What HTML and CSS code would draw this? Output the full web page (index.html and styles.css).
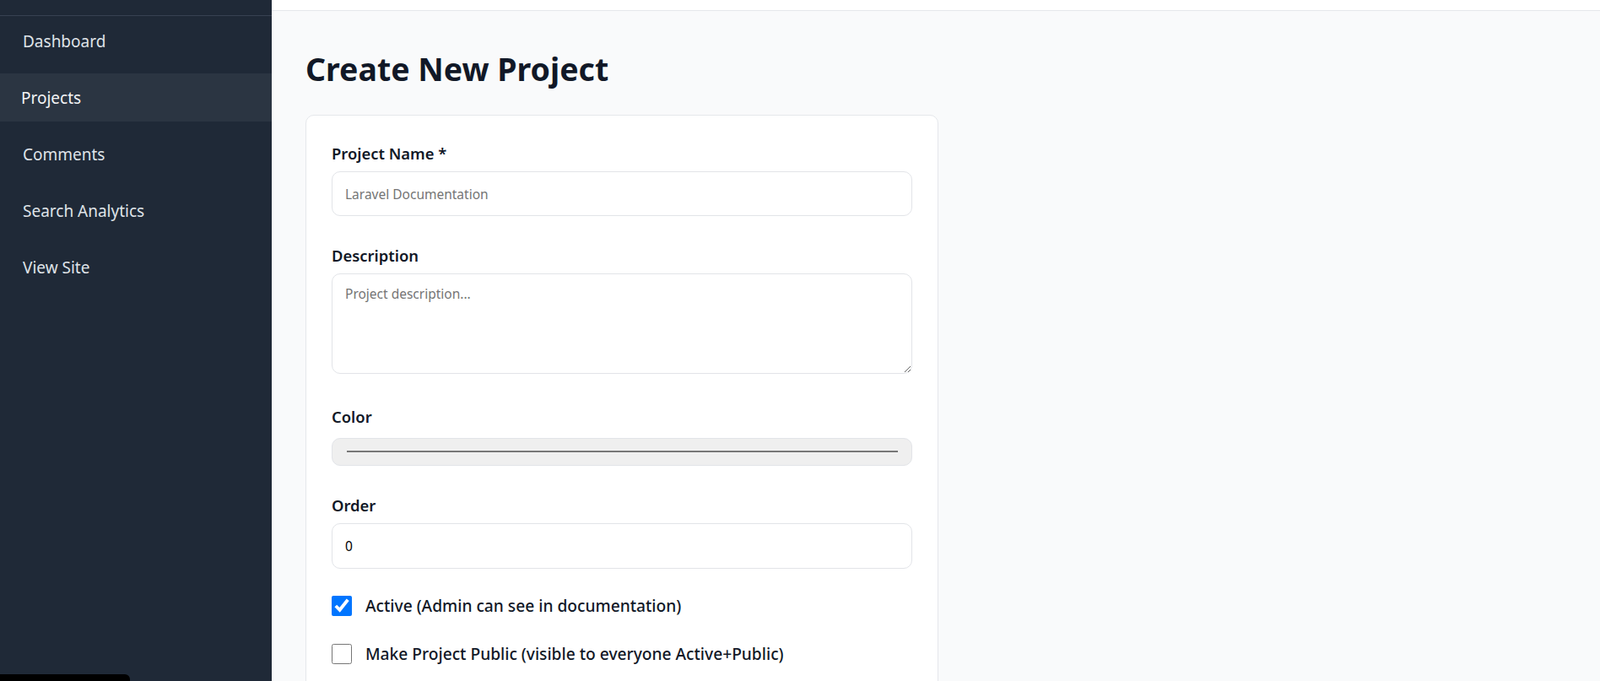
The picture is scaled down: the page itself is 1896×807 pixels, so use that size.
FILE: index.html
```html
<!DOCTYPE html>
<html lang="en">
<head>
<meta charset="utf-8">
<title>Create New Project</title>
<link rel="stylesheet" href="styles.css">
</head>
<body>
<div class="layout">
  <aside class="sidebar">
    <div class="sidebar-top"></div>
    <nav class="nav">
      <a class="nav-item" href="#">Dashboard</a>
      <a class="nav-item active" href="#">Projects</a>
      <a class="nav-item" href="#">Comments</a>
      <a class="nav-item" href="#">Search Analytics</a>
      <a class="nav-item" href="#">View Site</a>
    </nav>
  </aside>
  <main class="main">
    <div class="topbar"></div>
    <div class="content">
      <h1 class="title">Create New Project</h1>
      <form class="card">
        <div class="field">
          <label class="label" for="name">Project Name *</label>
          <input class="input" id="name" type="text" placeholder="Laravel Documentation">
        </div>
        <div class="field field-textarea">
          <label class="label" for="desc">Description</label>
          <textarea class="input textarea" id="desc" placeholder="Project description..."></textarea>
        </div>
        <div class="field">
          <label class="label label-color" for="color">Color</label>
          <input class="color" id="color" type="color" value="#000000">
        </div>
        <div class="field">
          <label class="label" for="order">Order</label>
          <input class="input input-order" id="order" type="number" value="0">
        </div>
        <div class="checks">
          <label class="check">
            <input class="checkbox" type="checkbox" checked>
            <span>Active (Admin can see in documentation)</span>
          </label>
          <label class="check">
            <input class="checkbox" type="checkbox">
            <span>Make Project Public (visible to everyone Active+Public)</span>
          </label>
        </div>
      </form>
    </div>
  </main>
</div>
<div class="debug-tab"></div>
</body>
</html>
```

FILE: styles.css
```css
* { box-sizing: border-box; }
html, body { height: 100%; }
body {
  margin: 0;
  font-family: "Noto Sans", "Open Sans", sans-serif;
  color: #111827;
  background: #f9fafb;
  overflow: hidden;
}
.layout {
  display: flex;
  min-height: 100%;
}
.sidebar {
  width: 322px;
  flex: none;
  background: #1f2937;
  min-height: 807px;
}
.sidebar-top {
  height: 19px;
  border-bottom: 1px solid #374151;
}
.nav {
  display: flex;
  flex-direction: column;
  gap: 10px;
  padding-top: 1px;
}
.nav-item {
  display: flex;
  align-items: center;
  height: 57px;
  padding-left: 27px;
  color: #dfe3e8;
  text-decoration: none;
  font-size: 19px;
}
.nav-item.active {
  background: #2b3542;
  color: #f3f4f6;
  padding-left: 25px;
}
.main {
  flex: 1;
  min-width: 0;
}
.topbar {
  height: 13px;
  background: #fff;
  border-bottom: 1px solid #e5e7eb;
}
.content {
  padding: 46px 40px 0;
}
.title {
  margin: 0 0 31px;
  font-size: 37.5px;
  line-height: 46px;
  font-weight: 700;
  color: #111827;
}
.card {
  width: 750px;
  background: #fff;
  border: 1px solid #e5e7eb;
  border-radius: 10px;
  padding: 32px 30px 40px;
}
.field {
  margin-bottom: 34px;
}
.field-textarea {
  margin-bottom: 38px;
}
.label {
  display: block;
  font-size: 18.4px;
  line-height: 25px;
  font-weight: 600;
  margin-bottom: 9px;
  color: #111827;
}
.label-color {
  margin-bottom: 13px;
}
.input {
  display: block;
  width: 100%;
  height: 53px;
  padding: 0 15px;
  border: 1px solid #e2e4e8;
  border-radius: 10px;
  background: #fff;
  font-family: "Noto Sans", sans-serif;
  font-size: 15.5px;
  color: #000;
  outline: none;
}
.input-order {
  height: 54px;
}
.input::placeholder { color: #757575; }
.textarea {
  height: 119px;
  padding: 12px 15px;
  line-height: 22px;
  resize: vertical;
}
.color {
  display: block;
  width: 100%;
  height: 33px;
  padding: 0;
  border: 1px solid #e2e4e8;
  border-radius: 10px;
  background: #efefef;
  cursor: pointer;
}
.color::-webkit-color-swatch-wrapper {
  padding: 14px 16px 15px 17px;
}
.color::-webkit-color-swatch {
  border: 1px solid #777;
  background-color: #777 !important;
}
.checks {
  display: flex;
  flex-direction: column;
  gap: 32px;
  margin-top: -3px;
  margin-bottom: 40px;
}
.check {
  display: flex;
  align-items: center;
  gap: 16px;
  height: 25px;
  font-size: 19.2px;
  font-weight: 500;
  color: #111827;
}
.checkbox {
  width: 24px;
  height: 24px;
  margin: 0;
  accent-color: #0075ff;
  flex: none;
}
.debug-tab {
  position: fixed;
  left: 0;
  bottom: -10px;
  width: 154px;
  height: 18px;
  background: #000;
  border-radius: 0 6px 0 0;
}
```
